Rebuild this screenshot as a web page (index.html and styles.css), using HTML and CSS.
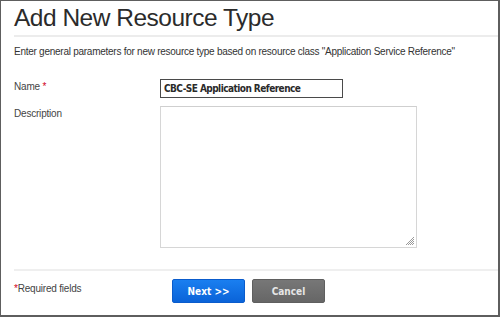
FILE: index.html
```html
<!DOCTYPE html>
<html>
<head>
<meta charset="utf-8">
<link rel="stylesheet" href="styles.css">
</head>
<body>
<div class="frame">
  <h1 class="title">Add New Resource Type</h1>
  <p class="intro">Enter general parameters for new resource type based on resource class "Application Service Reference"</p>
  <div class="form">
    <div class="row">
      <label class="label">Name <span class="req">*</span></label>
      <div class="input">CBC-SE Application Reference</div>
    </div>
    <div class="row">
      <label class="label">Description</label>
      <div class="textarea">
        <svg class="grip" width="10" height="10" viewBox="0 0 10 10">
          <path d="M9 1L1 9M9 3L3 9M9 5L5 9M9 7L7 9" stroke="#9a9a9a" stroke-width="1"/>
        </svg>
      </div>
    </div>
  </div>
  <div class="footer">
    <div class="note"><span class="req">*</span>Required fields</div>
    <div class="buttons">
      <button class="btn btn-primary">Next &gt;&gt;</button>
      <button class="btn btn-secondary">Cancel</button>
    </div>
  </div>
</div>
</body>
</html>
```
FILE: styles.css
```css
html, body {
  margin: 0;
  padding: 0;
  background: #ffffff;
}
.frame {
  width: 500px;
  height: 317px;
  box-sizing: border-box;
  border-style: solid;
  border-color: #5e5e5e;
  border-width: 1px 2px 2px 1px;
  padding-left: 13px;
  display: flex;
  flex-direction: column;
  font-family: "Liberation Sans", Arial, sans-serif;
  color: #333;
}
.title {
  margin: 0;
  padding: 4px 0 5px 0;
  font-size: 24.5px;
  letter-spacing: -0.5px;
  font-weight: normal;
  line-height: 25px;
  color: #2b2b2b;
  border-bottom: 2px solid #ececec;
}
.intro {
  margin: 0;
  padding: 9px 0 0 0;
  font-size: 10px;
  letter-spacing: -0.26px;
  line-height: 12px;
  color: #333;
}
.form {
  padding-top: 21px;
  display: flex;
  flex-direction: column;
  gap: 8px;
  flex: 1;
}
.row {
  display: flex;
  align-items: flex-start;
}
.label {
  width: 146px;
  font-size: 10px;
  letter-spacing: -0.2px;
  color: #444;
  line-height: 12px;
  padding-top: 2px;
}
.req {
  color: #d0021b;
}
.input {
  width: 178px;
  height: 17px;
  border: 1px solid #4a4a4a;
  box-sizing: content-box;
  font-family: "DejaVu Sans Condensed", "DejaVu Sans", sans-serif;
  font-stretch: condensed;
  font-size: 10px;
  font-weight: bold;
  line-height: 17px;
  padding-left: 3px;
  color: #2a2a2a;
  letter-spacing: -0.55px;
}
.textarea {
  width: 255px;
  height: 140px;
  border: 1px solid #d6d6d6;
  border-top-color: #cfcfcf;
  position: relative;
}
.grip {
  position: absolute;
  right: 1px;
  bottom: 1px;
}
.footer {
  border-top: 2px solid #efefef;
  height: 46px;
  box-sizing: border-box;
  display: flex;
  align-items: flex-start;
}
.note {
  width: 158px;
  font-size: 10px;
  letter-spacing: -0.2px;
  color: #444;
  padding-top: 12px;
}
.buttons {
  display: flex;
  gap: 7px;
  padding-top: 8px;
}
.btn {
  width: 73px;
  height: 24px;
  border-radius: 2px;
  font-family: "DejaVu Sans Condensed", "DejaVu Sans", sans-serif;
  font-stretch: condensed;
  font-size: 10px;
  color: #fff;
  padding: 0;
  border: 1px solid transparent;
}
.btn-primary {
  background: linear-gradient(#1a7ff0, #0a63d8);
  border-color: #0a5ccc;
  font-weight: bold;
}
.btn-secondary {
  background: linear-gradient(#777, #666);
  border-color: #5f5f5f;
  color: #e6e6e6;
  font-weight: bold;
}
```
